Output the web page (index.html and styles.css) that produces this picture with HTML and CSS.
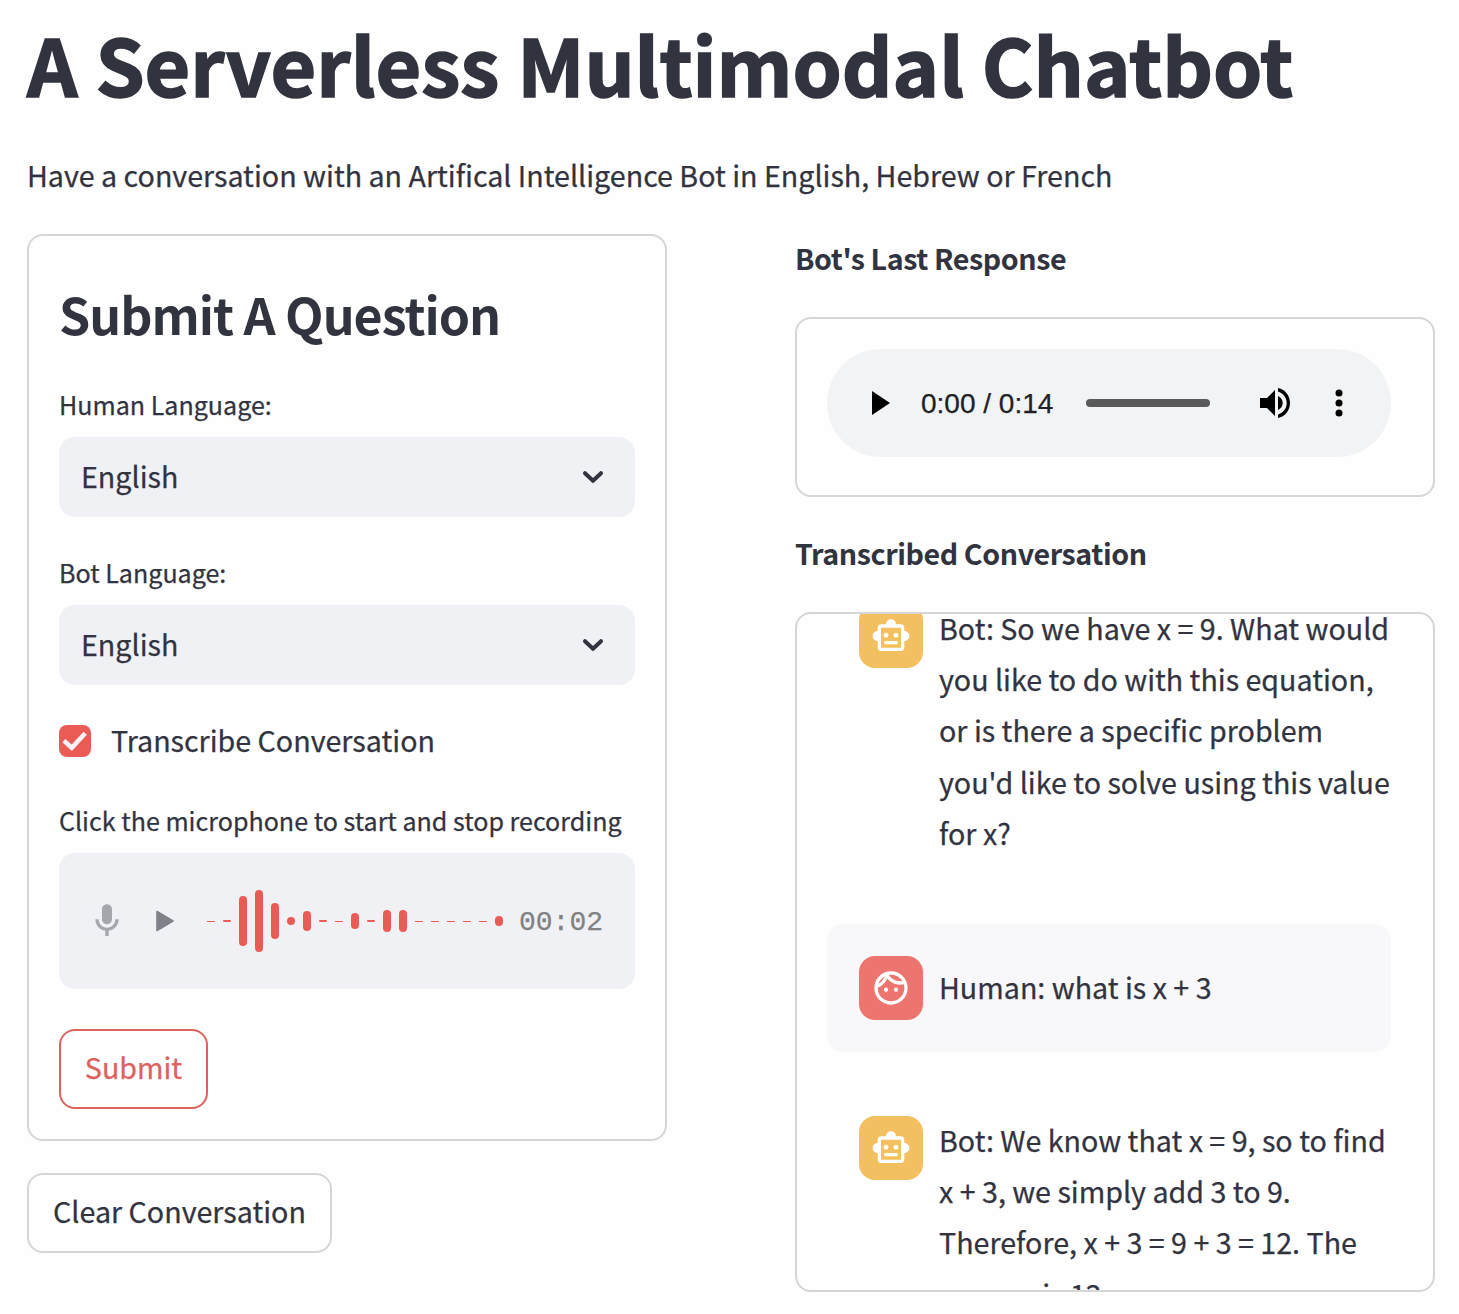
FILE: index.html
```html
<!DOCTYPE html>
<html lang="en">
<head>
<meta charset="utf-8">
<title>A Serverless Multimodal Chatbot</title>
<link rel="stylesheet" href="styles.css">
</head>
<body>
<svg class="defs" width="0" height="0" aria-hidden="true">
  <symbol id="chevron" viewBox="0 0 24 16"><path d="M4 4.2 12 11.8 20 4.2" fill="none" stroke="#31333f" stroke-width="4" stroke-linecap="round" stroke-linejoin="round"/></symbol>
  <symbol id="robot" viewBox="0 0 24 24"><path d="M20 9V7c0-1.1-.9-2-2-2h-3c0-1.66-1.34-3-3-3S9 3.34 9 5H6c-1.1 0-2 .9-2 2v2c-1.66 0-3 1.34-3 3s1.34 3 3 3v4c0 1.1.9 2 2 2h12c1.1 0 2-.9 2-2v-4c1.66 0 3-1.34 3-3s-1.34-3-3-3zm-2 10H6V7h12v12zm-9-6c-.83 0-1.5-.67-1.5-1.5S8.17 10 9 10s1.5.67 1.5 1.5S9.83 13 9 13zm7.5-1.5c0 .83-.67 1.5-1.5 1.5s-1.5-.67-1.5-1.5.67-1.5 1.5-1.5 1.5.67 1.5 1.5zM8 15h8v2H8v-2z"/></symbol>
  <symbol id="face" viewBox="0 0 24 24"><path d="M10.25 13c0 .69-.56 1.25-1.25 1.25S7.75 13.69 7.75 13s.56-1.25 1.25-1.25 1.25.56 1.25 1.25zM15 11.75c-.69 0-1.25.56-1.25 1.25s.56 1.25 1.25 1.25 1.25-.56 1.25-1.25-.56-1.25-1.25-1.25zm7 .25c0 5.52-4.48 10-10 10S2 17.52 2 12 6.48 2 12 2s10 4.48 10 10zM10.66 4.12C12.06 6.44 14.6 8 17.5 8c.46 0 .91-.05 1.34-.12C17.44 5.56 14.9 4 12 4c-.46 0-.91.05-1.34.12zM4.42 9.47c1.71-.97 3.03-2.55 3.66-4.44C6.37 6 5.05 7.58 4.42 9.47zM20 12c0-.78-.12-1.53-.33-2.24-.7.15-1.42.24-2.17.24-3.13 0-5.92-1.44-7.76-3.69C8.69 8.87 6.6 10.88 4 11.86c.01.04 0 .09 0 .14 0 4.41 3.59 8 8 8s8-3.59 8-8z"/></symbol>
</svg>

<h1 class="title">A Serverless Multimodal Chatbot</h1>
<p class="intro">Have a conversation with an Artifical Intelligence Bot in English, Hebrew or French</p>

<main class="columns">
  <section class="left">
    <form class="card form">
      <h2 class="form-title">Submit A Question</h2>
      <label class="label">Human Language:</label>
      <div class="select"><span class="select-value">English</span><svg class="chevron"><use href="#chevron"/></svg></div>
      <label class="label label-next">Bot Language:</label>
      <div class="select"><span class="select-value">English</span><svg class="chevron"><use href="#chevron"/></svg></div>
      <div class="check-row">
        <span class="checkbox"><svg width="32" height="32" viewBox="0 0 32 32"><path d="M4.800 15.600 12.800 22.800 26.200 8.200" fill="none" stroke="#f8f1f5" stroke-width="4.600"/></svg></span>
        <span class="check-text">Transcribe Conversation</span>
      </div>
      <label class="label label-rec">Click the microphone to start and stop recording</label>
      <div class="recorder">
        <svg class="mic" viewBox="0 0 24 24"><path d="M12 14c1.66 0 3-1.34 3-3V5c0-1.66-1.34-3-3-3S9 3.34 9 5v6c0 1.66 1.34 3 3 3zm5-3c0 2.76-2.24 5-5 5s-5-2.24-5-5H5c0 3.53 2.61 6.43 6 6.92V21h2v-3.08c3.39-.49 6-3.39 6-6.92h-2z"/></svg>
        <svg class="rec-play" viewBox="0 0 18 22"><path d="M1 1.5 17 11 1 20.5Z" stroke-width="1.6" stroke-linejoin="round"/></svg>
        <div class="wave">
          <i class="bar thin" style="height:1px"></i><i class="bar" style="height:2px"></i><i class="bar" style="height:50px"></i><i class="bar" style="height:62px"></i><i class="bar" style="height:36px"></i><i class="bar" style="height:8px"></i><i class="bar" style="height:20px"></i><i class="bar" style="height:2px"></i><i class="bar thin" style="height:1px"></i><i class="bar" style="height:16px"></i><i class="bar" style="height:2px"></i><i class="bar" style="height:22px"></i><i class="bar" style="height:22px"></i><i class="bar thin" style="height:1px"></i><i class="bar thin" style="height:1px"></i><i class="bar thin" style="height:1px"></i><i class="bar thin" style="height:1px"></i><i class="bar thin" style="height:1px"></i><i class="bar" style="height:10px"></i>
        </div>
        <span class="rec-time">00:02</span>
      </div>
      <button type="button" class="btn btn-submit">Submit</button>
    </form>
    <button type="button" class="btn btn-clear">Clear Conversation</button>
  </section>

  <section class="right">
    <h3 class="heading">Bot's Last Response</h3>
    <div class="card audio-card">
      <div class="audio">
        <svg class="audio-play" viewBox="0 0 18 24"><path d="M0 0 18 12 0 24Z"/></svg>
        <span class="audio-time">0:00 / 0:14</span>
        <span class="track"></span>
        <svg class="volume" viewBox="0 0 30 30"><path d="M0 10h7l8-8v26l-8-8H0zM18 8c2.800 1.200 4.700 3.800 4.700 7s-1.900 5.800-4.700 7zM18 0c7 1.300 12 7.500 12 15s-5 13.700-12 15v-3.500c5-1.500 8.700-6 8.700-11.500S23 5 18 3.500z"/></svg>
        <svg class="dots" viewBox="0 0 8 28"><circle cx="4" cy="4" r="3.500"/><circle cx="4" cy="14" r="3.500"/><circle cx="4" cy="24" r="3.500"/></svg>
      </div>
    </div>
    <h3 class="heading heading-chat">Transcribed Conversation</h3>
    <div class="card chat">
      <div class="messages">
        <div class="message">
          <span class="avatar bot"><svg><use href="#robot"/></svg></span>
          <p class="text">Bot: So we have x = 9. What would<br>you like to do with this equation,<br>or is there a specific problem<br>you'd like to solve using this value<br>for x?</p>
        </div>
        <div class="message human-row">
          <span class="avatar human"><svg><use href="#face"/></svg></span>
          <p class="text">Human: what is x + 3</p>
        </div>
        <div class="message">
          <span class="avatar bot"><svg><use href="#robot"/></svg></span>
          <p class="text">Bot: We know that x = 9, so to find<br>x + 3, we simply add 3 to 9.<br>Therefore, x + 3 = 9 + 3 = 12. The<br>answer is 12.</p>
        </div>
      </div>
    </div>
  </section>
</main>
</body>
</html>
```
FILE: styles.css
```css
* { box-sizing: border-box; }

body {
  margin: 0;
  padding: 10px 24px 0 27px;
  height: 1314px;
  overflow: hidden;
  background: #fefefe;
  color: #31333f;
  font-family: "Noto Sans CJK SC", "Noto Sans", sans-serif;
  font-size: 28.65px;
  line-height: 51.2px;
  -webkit-text-stroke-width: 0.25px;
}

h1, h2, h3, p { margin: 0; }
svg { display: block; }
.defs { position: absolute; }

.title {
  height: 139px;
  font-size: 78.8px;
  line-height: 106px;
  font-weight: 700;
  white-space: nowrap;
  -webkit-text-stroke-width: 1.6px;
}
.intro { height: 85px; white-space: nowrap; }

.columns { display: flex; gap: 128px; }
.left, .right { width: 640px; flex: none; }

.card { border: 2px solid #d5d6d6; border-radius: 16px; }

/* Question form */
.form {
  height: 907px;
  padding: 44px 30px 0;
  display: flex;
  flex-direction: column;
  align-items: stretch;
}
.form-title {
  font-size: 50.1px;
  line-height: 66px;
  font-weight: 700;
  letter-spacing: -0.98px;
  margin-bottom: 37px;
  white-space: nowrap;
  -webkit-text-stroke-width: 0;
}
.label {
  font-size: 25.07px;
  line-height: 42px;
  margin-bottom: 12px;
  white-space: nowrap;
}
.label-next { margin-top: 34px; }
.select {
  height: 80px;
  padding: 0 30px 0 22px;
  border-radius: 16px;
  background: #f0f1f5;
  display: flex;
  align-items: center;
  justify-content: space-between;
}
.select-value { padding-bottom: 2px; }
.chevron { width: 24px; height: 16px; }
.check-row {
  height: 52px;
  margin-top: 30px;
  display: flex;
  align-items: center;
  gap: 20px;
}
.check-text { padding-bottom: 2px; }
.checkbox { width: 32px; height: 32px; border-radius: 8px; background: #ea5b55; }
.label-rec { margin-top: 32px; }
.recorder {
  height: 136px;
  padding: 0 32px 0 28px;
  border-radius: 16px;
  background: #f0f1f5;
  display: flex;
  align-items: center;
}
.mic { width: 40px; height: 40px; fill: #a6a6ad; }
.rec-play { width: 18px; height: 22px; margin-left: 29px; fill: #808088; stroke: #808088; }
.wave { margin-left: 33px; height: 62px; display: flex; align-items: center; gap: 8px; }
.bar { width: 8px; border-radius: 4px; background: #ea5b55; }
.thin { border-radius: 0; }
.rec-time {
  margin-left: 16px;
  padding-top: 4px;
  font-family: "Liberation Mono", monospace;
  font-size: 28px;
  color: #808284;
}

.btn {
  height: 80px;
  padding: 0 0 4px;
  border: 2px solid #d5d6d6;
  border-radius: 16px;
  background: #fefefe;
  color: #31333f;
  font: inherit;
  white-space: nowrap;
}
.btn-submit { width: 149px; margin-top: 40px; border-color: #dc625e; color: #dc625e; }
.btn-clear { display: block; width: 305px; margin-top: 32px; }

/* Response column */
.heading {
  height: 83px;
  font-size: 28.65px;
  line-height: 47px;
  font-weight: 700;
  letter-spacing: -0.42px;
  white-space: nowrap;
  -webkit-text-stroke-width: 0;
}
.heading-chat { margin-top: 32px; }
.audio-card { height: 180px; padding: 30px; }
.audio {
  width: 564px;
  height: 108px;
  padding-left: 45px;
  border-radius: 54px;
  background: #f1f3f4;
  display: flex;
  align-items: center;
}
.audio-play { width: 18px; height: 24px; }
.audio-time {
  width: 134px;
  margin-left: 31px;
  padding-top: 2px;
  font-family: "Liberation Sans", sans-serif;
  font-size: 28px;
  color: #202124;
  white-space: nowrap;
}
.track { width: 124px; height: 8px; margin-left: 31px; border-radius: 4px; background: #5a5a5a; }
.volume { width: 30px; height: 30px; margin-left: 50px; }
.dots { width: 8px; height: 28px; margin-left: 45px; }

/* Transcript, scrolled so that the first message is partly hidden */
.chat { height: 680px; padding: 0 42px 0 30px; overflow: hidden; }
.messages { margin-top: -42px; display: flex; flex-direction: column; gap: 32px; }
.message { display: flex; gap: 16px; padding: 32px 0 32px 32px; border-radius: 16px; }
.human-row { background: #f8f8fa; align-items: center; }
.avatar {
  width: 64px;
  height: 64px;
  flex: none;
  border-radius: 16px;
  display: flex;
  align-items: center;
  justify-content: center;
}
.avatar svg { width: 40px; height: 40px; fill: #fff; }
.bot { background: #f2c060; }
.human { background: #ec7570; }
.text { margin: -2px 0 2px; white-space: nowrap; }
.human-row .text { margin: -1px 0 1px; }
```
